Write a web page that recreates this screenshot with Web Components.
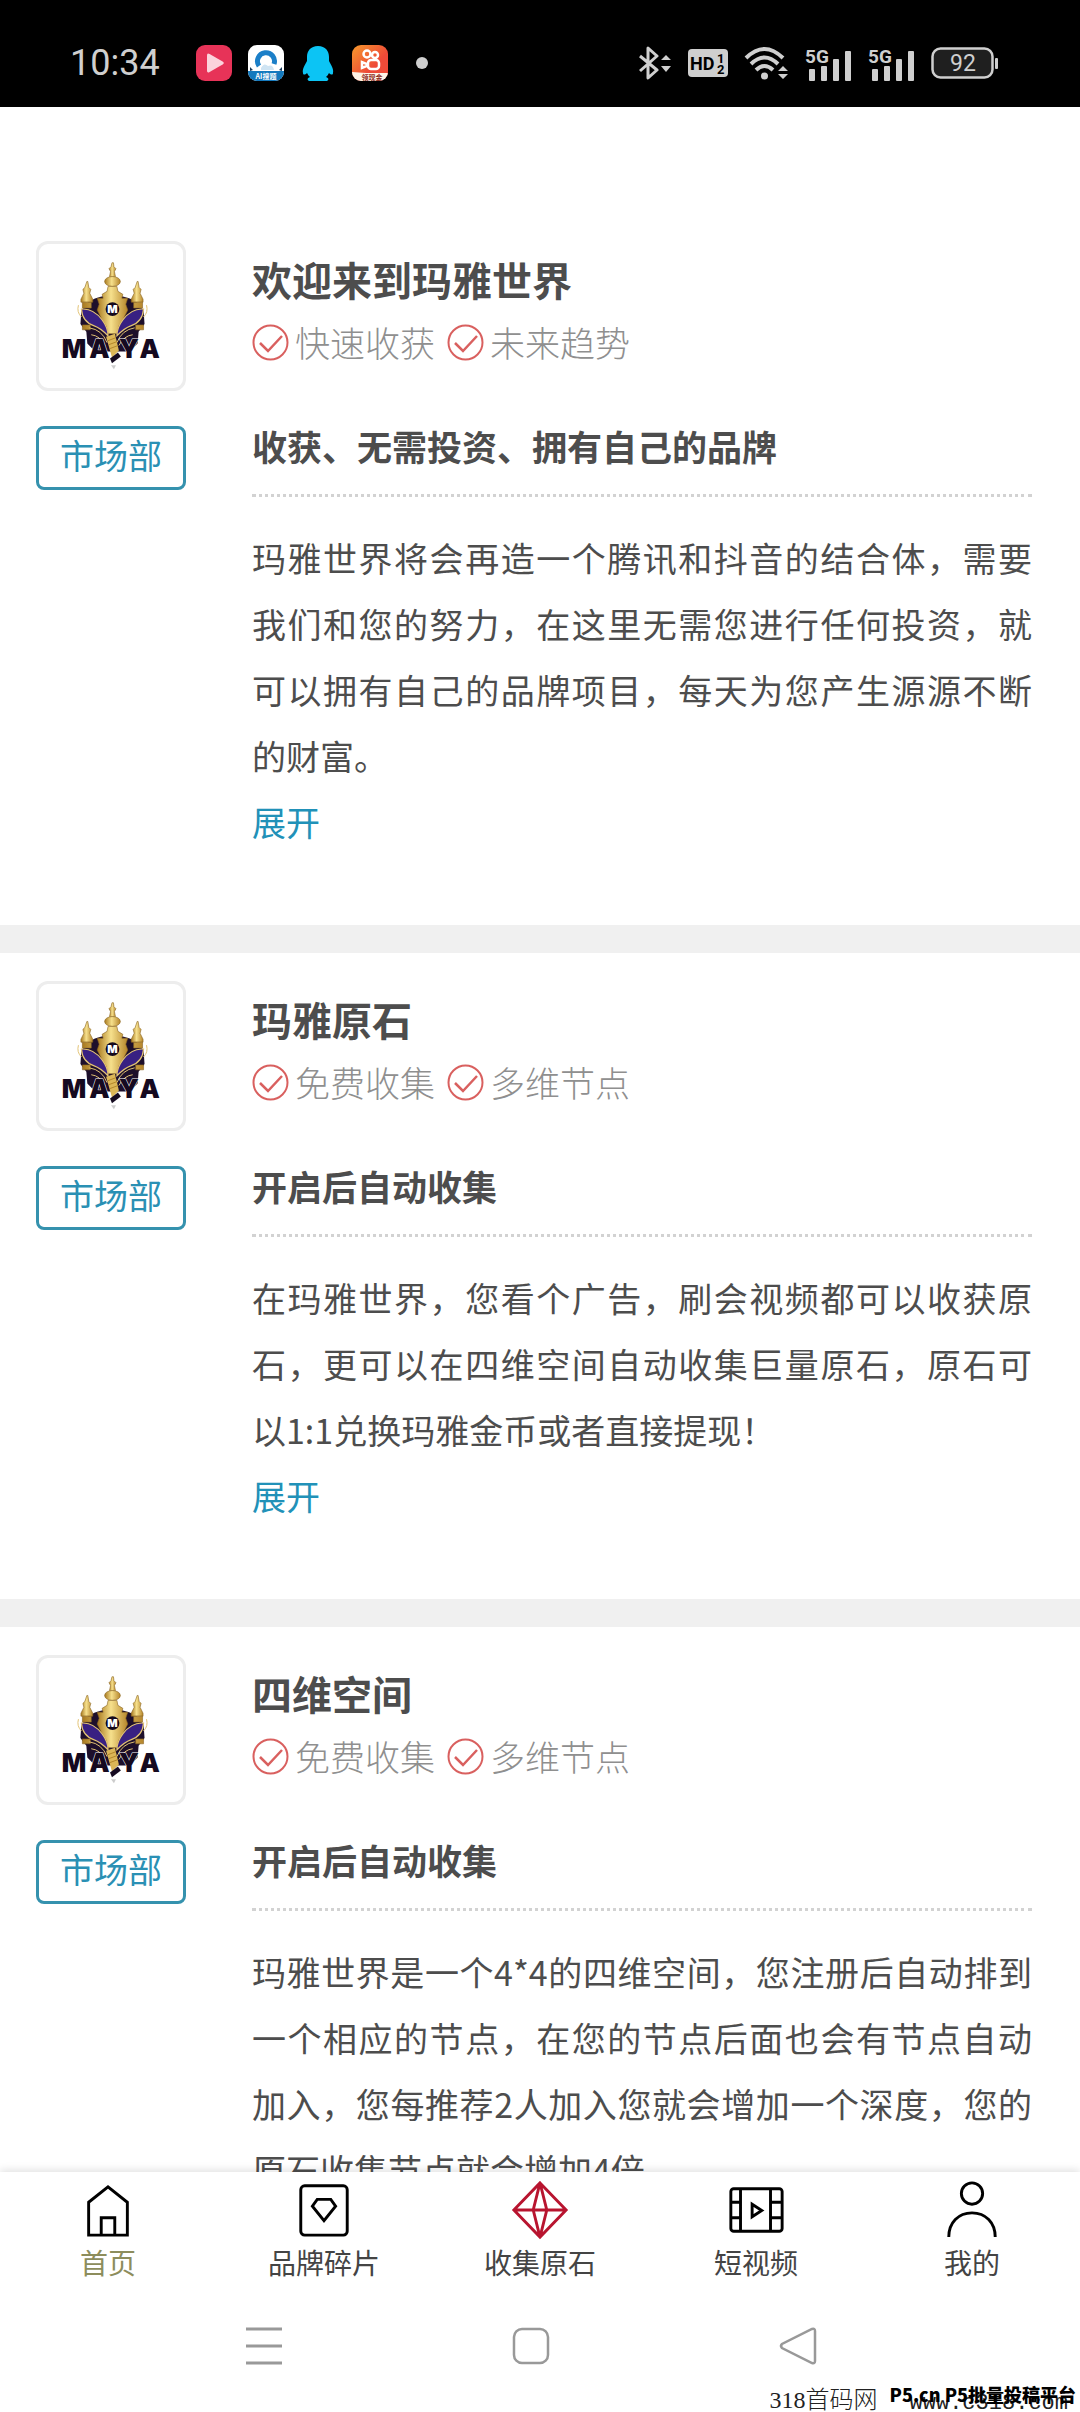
<!DOCTYPE html>
<html lang="zh-CN">
<head>
<meta charset="utf-8">
<meta name="viewport" content="width=device-width, initial-scale=1">
<title>玛雅世界</title>
<style>
html, body{
    margin: 0;
    height: 100%;
}
body{
    background: #fff;
    color: #4d4d4d;
    font-family: "Noto Sans CJK SC", "Noto Sans", sans-serif;
}
</style>
</head>
<body>
<app-shell>
    <status-bar slot="top" time="10:34" battery="92"></status-bar>

    <info-card tag="市场部" heading="收获、无需投资、拥有自己的品牌" more="展开">
        <span slot="title">欢迎来到玛雅世界</span>
        <check-label slot="badges">快速收获</check-label>
        <check-label slot="badges">未来趋势</check-label>
        玛雅世界将会再造一个腾讯和抖音的结合体，需要我们和您的努力，在这里无需您进行任何投资，就可以拥有自己的品牌项目，每天为您产生源源不断的财富。
    </info-card>
    <info-card tag="市场部" heading="开启后自动收集" more="展开">
        <span slot="title">玛雅原石</span>
        <check-label slot="badges">免费收集</check-label>
        <check-label slot="badges">多维节点</check-label>
        在玛雅世界，您看个广告，刷会视频都可以收获原石，更可以在四维空间自动收集巨量原石，原石可以1:1兑换玛雅金币或者直接提现！
    </info-card>
    <info-card tag="市场部" heading="开启后自动收集">
        <span slot="title">四维空间</span>
        <check-label slot="badges">免费收集</check-label>
        <check-label slot="badges">多维节点</check-label>
        玛雅世界是一个4*4的四维空间，您注册后自动排到一个相应的节点，在您的节点后面也会有节点自动加入，您每推荐2人加入您就会增加一个深度，您的原石收集节点就会增加4倍
    </info-card>

    <tab-bar slot="bottom">
        <tab-item icon="home" active>首页</tab-item>
        <tab-item icon="brand">品牌碎片</tab-item>
        <tab-item icon="gem">收集原石</tab-item>
        <tab-item icon="video">短视频</tab-item>
        <tab-item icon="user">我的</tab-item>
    </tab-bar>
    <system-nav slot="bottom"></system-nav>
    <water-mark slot="bottom"></water-mark>
</app-shell>

<script>
function attach(el, html){
    const template = document.createElement('template');
    template.innerHTML = html;
    const root = el.attachShadow({mode: 'open'});
    root.appendChild(template.content.cloneNode(true));
    return root;
}

class AppShell extends HTMLElement{
    constructor() {
        super();
        attach(this, `
        <style>
        :host{
            display: flex;
            flex-direction: column;
            height: 100vh;
            position: relative;
            overflow: hidden;
        }
        main{
            flex: 1;
            min-height: 0;
            overflow: hidden;
            padding-top: 106px;
        }
        </style>
        <slot name="top"></slot>
        <main><slot></slot></main>
        <slot name="bottom"></slot>
        `);
    }
}
customElements.define('app-shell', AppShell);

class StatusBar extends HTMLElement{
    constructor() {
        super();
        // signal bars with the network type above, used once for each SIM
        const signal = `
        <svg width="47" height="40" viewBox="0 -5 47 40" fill="#cfcfcf">
            <text x="0" y="15" font-size="19" font-weight="700">5G</text>
            <rect x="4" y="21" width="6" height="12" rx="1"/>
            <rect x="16" y="18" width="6" height="15" rx="1"/>
            <rect x="28" y="11" width="6" height="22" rx="1"/>
            <rect x="40" y="3" width="6" height="30" rx="1"/>
        </svg>`;
        attach(this, `
        <style>
        :host{
            display: flex;
            align-items: center;
            justify-content: space-between;
            box-sizing: border-box;
            height: 107px;
            padding: 18px 81px 0 70px;
            background: #000;
            color: #cfcfcf;
            font-family: Roboto, "Noto Sans", sans-serif;
            flex: none;
        }
        .group{
            display: flex;
            align-items: center;
        }
        .apps{
            gap: 16px;
        }
        .time{
            font-size: 36px;
            line-height: 44px;
            margin-right: 20px;
        }
        .state{
            gap: 16px;
        }
        svg{
            display: block;
        }
        svg text{
            font-family: "Roboto", sans-serif;
        }
        .cjk{
            font-family: "Noto Sans CJK SC", sans-serif;
        }
        </style>
        <div class="group apps">
            <span class="time"></span>
            <svg width="36" height="36" viewBox="0 0 36 36">
                <rect width="36" height="36" rx="9" fill="#e73358"/>
                <path d="M11 10.5q0-3 2.600-1.500l13 7.500q2.400 1.500 0 3l-13 7.500q-2.600 1.500-2.600-1.500z" fill="#fbd3dc"/>
            </svg>
            <svg width="36" height="36" viewBox="0 0 36 36">
                <clipPath id="b"><rect width="36" height="36" rx="9"/></clipPath>
                <g clip-path="url(#b)">
                    <rect width="36" height="36" fill="#fff"/>
                    <path d="M11 21a8.500 8.500 0 1 1 15-2" fill="none" stroke="#1b7fc8" stroke-width="5"/>
                    <path d="M13 23q3-6 7-2q5-2 6 4h-13z" fill="#cfe4f3"/>
                    <rect y="26" width="36" height="10" fill="#1479bd"/>
                    <path d="M2 22l3 3-3 1zM34 22l-3 3 3 1z" fill="#173a5c"/>
                    <text class="cjk" x="18" y="34" text-anchor="middle" font-size="7" font-weight="700" fill="#fff">AI搜题</text>
                </g>
            </svg>
            <svg width="36" height="36" viewBox="0 0 36 36">
                <path d="M18 1C10.500 1 7 6 7 12v4c-2 4-5 8-4 12 0 2 2 2 4 0 1 2 2 3 3 4-3 1-3 3-1 4h18c2-1 2-3-1-4 1-1 2-2 3-4 2 2 4 2 4 0 1-4-2-8-4-12v-4C29 6 25.500 1 18 1z" fill="#0cc4f4"/>
            </svg>
            <svg width="36" height="36" viewBox="0 0 36 36">
                <defs>
                    <clipPath id="k"><rect width="36" height="36" rx="9"/></clipPath>
                    <linearGradient id="o" x2="1" y2="1"><stop stop-color="#f79a2c"/><stop offset=".6" stop-color="#ee4a38"/></linearGradient>
                </defs>
                <g clip-path="url(#k)">
                    <rect width="36" height="36" fill="url(#o)"/>
                    <g fill="none" stroke="#fff" stroke-width="2.500">
                        <circle cx="15" cy="9" r="3.500"/><circle cx="23" cy="10" r="3"/>
                        <rect x="16" y="15" width="11" height="9" rx="3"/>
                        <path d="M10 17v6l5-2v-2z"/>
                    </g>
                    <path d="M0 27l14 1h22v8h-36z" fill="#fdf3e6"/>
                    <text class="cjk" x="20" y="35" text-anchor="middle" font-size="7" font-weight="700" fill="#8d2a1c">领现金</text>
                </g>
            </svg>
            <svg width="36" height="12" viewBox="0 0 36 12"><circle cx="18" cy="6" r="6" fill="#cfcfcf"/></svg>
        </div>
        <div class="group state">
            <svg width="34" height="34" viewBox="0 0 34 34">
                <path d="M2 10l17 14-9 8V2l9 8L2 25" fill="none" stroke="#cfcfcf" stroke-width="3" stroke-linejoin="round"/>
                <path d="M23 14l5-5 5 5zM23 20h10l-5 6z" fill="#cfcfcf"/>
            </svg>
            <svg width="40" height="28" viewBox="0 0 40 28">
                <rect width="40" height="28" rx="4" fill="#cfcfcf"/>
                <g font-weight="700" fill="#000">
                    <text x="2" y="21" font-size="18">HD</text>
                    <text x="29" y="14" font-size="13">1</text>
                    <text x="29" y="25" font-size="13">2</text>
                </g>
            </svg>
            <svg width="45" height="34" viewBox="0 0 45 34">
                <g fill="none" stroke="#cfcfcf" stroke-width="4">
                    <path d="M2 12Q20.500-6 39 12"/>
                    <path d="M7 18Q20.500 5 34 18"/>
                    <path d="M12 24Q20.500 16 29 24"/>
                </g>
                <circle cx="20.500" cy="30" r="3.500" fill="#cfcfcf"/>
                <path d="M34 25l5-5 5 5zM34 28h10l-5 5z" fill="#cfcfcf"/>
            </svg>
            ${signal}
            ${signal}
            <svg width="68" height="32" viewBox="0 0 68 32">
                <rect x="1.500" y="1.500" width="60" height="29" rx="8" fill="#1f1f1f" stroke="#cfcfcf" stroke-width="2.500"/>
                <rect x="64" y="11" width="3" height="11" rx="1" fill="#cfcfcf"/>
                <text class="battery" x="32" y="24" text-anchor="middle" font-size="23" fill="#cfcfcf"></text>
            </svg>
        </div>
        `);
        this.shadowRoot.querySelector('.time').textContent = this.getAttribute('time');
        this.shadowRoot.querySelector('.battery').textContent = this.getAttribute('battery');
    }
}
customElements.define('status-bar', StatusBar);

class MayaLogo extends HTMLElement{
    constructor() {
        super();
        attach(this, `
        <style>
        :host{
            display: block;
            box-sizing: border-box;
            height: 150px;
            border: 3px solid #ededed;
            border-radius: 12px;
        }
        svg{
            display: block;
            width: 100%;
            height: 100%;
        }
        text{
            font-family: Inter, "Open Sans", sans-serif;
            font-weight: 900;
        }
        </style>
        <svg viewBox="0 0 146 146">
            <defs>
                <linearGradient id="gold" x2="1">
                    <stop stop-color="#a8791f"/><stop offset=".45" stop-color="#f6e08c"/><stop offset="1" stop-color="#b5852a"/>
                </linearGradient>
            </defs>
            <g transform="translate(17 12)">
                <!-- dark shield behind the towers -->
                <path d="M34 46q23-12 47 0l8 9 1 14-6 8-1 12-8 8H40l-8-8-1-12-6-8 1-14z" fill="#1d0f2b"/>
                <g fill="url(#gold)" stroke="#8a6420" stroke-width=".6">
                    <!-- middle tower -->
                    <path d="M57 7h1.500l.5 4 2 2-1.500 3 1 5h-6l1-5-1.500-3 2-2z"/>
                    <ellipse cx="57.500" cy="26" rx="8" ry="5"/>
                    <path d="M53 31h9l1 5 5 3-1 4h6l-2 6 2 6-4 8-5 8-2 8h-9l-2-8-5-8-4-8 2-6-2-6h6l-1-4 5-3z"/>
                    <!-- side towers -->
                    <path d="M31.500 26h1l1 6 2 2-1 4 3 6v3h-12v-3l3-6-1-4 2-2z"/>
                    <path d="M82.500 26h1l1 6 2 2-1 4 3 6v3h-12v-3l3-6-1-4 2-2z"/>
                    <path d="M27 47h9v6h-9zM79 47h9v6h-9zM27 70h8v5h-8zM81 70h8v5h-8z"/>
                </g>
                <g fill="#382082" stroke="#e3c374" stroke-width="1.200">
                    <path d="M26 54q12-1 21 11 6 8 6 16-8-8-14-10-12-4-13-17z"/>
                    <path d="M89 54q-12-1-21 11-6 8-6 16 8-8 14-10 12-4 13-17z"/>
                </g>
                <g fill="none" stroke="#e3c374" stroke-width="1">
                    <path d="M23 50q-2 7 3 12M92 50q2 7-3 12"/>
                    <path d="M34 73q13 2 18 15M36 80q9 1 14 11M80 73q-13 2-18 15M78 80q-9 1-14 11"/>
                </g>
                <circle cx="57.500" cy="54" r="7" fill="#140a1d"/>
                <text x="57.500" y="58" font-size="11" text-anchor="middle" fill="#fff">M</text>
                <text y="104" font-size="26" fill="#150a20" stroke="#fff" stroke-width="1" paint-order="stroke"><tspan x="6">M</tspan><tspan x="34">A</tspan><tspan x="64">Y</tspan><tspan x="85">A</tspan></text>
                <path d="M51 82l9-3 4 17-7 7z" fill="#dcb757"/>
                <path d="M53 86l8-3M54 90l8-3M55 94l8-3" stroke="#a8791f" stroke-width=".8"/>
                <path d="M55 104l8-6 3 4-9 7z" fill="#150a20"/>
                <path d="M56 111h5l-2 4z" fill="#ccc"/>
            </g>
        </svg>
        `);
    }
}
customElements.define('maya-logo', MayaLogo);

class CheckLabel extends HTMLElement{
    constructor() {
        super();
        attach(this, `
        <style>
        :host{
            display: inline-flex;
            align-items: center;
            gap: 6px;
            color: #8f8f8f;
            font-size: 35px;
            font-weight: 300;
            line-height: 60px;
        }
        svg{
            display: block;
        }
        </style>
        <svg width="37" height="37" viewBox="0 0 37 37" fill="none" stroke="#d9605f">
            <circle cx="18.500" cy="18.500" r="17" stroke-width="2"/>
            <path d="M8 19l8 8 14-15" stroke-width="2.500"/>
        </svg>
        <span><slot></slot></span>
        `);
    }
}
customElements.define('check-label', CheckLabel);

class InfoCard extends HTMLElement{
    constructor() {
        super();
        const root = attach(this, `
        <style>
        :host{
            display: block;
            border-bottom: 28px solid #f0f0f0;
            padding: 28px 48px 70px 36px;
        }
        .grid{
            display: grid;
            grid-template-columns: 150px 1fr;
            column-gap: 66px;
            row-gap: 35px;
        }
        header{
            padding-top: 8px;
        }
        h2{
            margin: 0;
            font-size: 40px;
            line-height: 60px;
            font-weight: 700;
        }
        .badges{
            display: flex;
            gap: 12px;
            padding-top: 3px;
        }
        .tag{
            box-sizing: border-box;
            height: 64px;
            border: 3px solid #3592ae;
            border-radius: 8px;
            color: #2a90b4;
            font-size: 34px;
            line-height: 52px;
            text-align: center;
        }
        h3{
            margin: 0;
            padding-bottom: 28px;
            border-bottom: 3px dotted #d2d2d2;
            font-size: 35px;
            line-height: 40px;
            font-weight: 700;
        }
        p{
            margin: 28px 0 0;
            font-size: 34px;
            line-height: 66px;
            text-align: justify;
        }
        button{
            display: block;
            padding: 0;
            border: 0;
            background: none;
            color: #2191b8;
            font: inherit;
            font-size: 34px;
            line-height: 66px;
            cursor: pointer;
        }
        </style>
        <div class="grid">
            <maya-logo></maya-logo>
            <header>
                <h2><slot name="title"></slot></h2>
                <div class="badges"><slot name="badges"></slot></div>
            </header>
            <div class="tag"></div>
            <section>
                <h3></h3>
                <p><slot></slot></p>
            </section>
        </div>
        `);
        root.querySelector('.tag').textContent = this.getAttribute('tag');
        root.querySelector('h3').textContent = this.getAttribute('heading');

        if(this.hasAttribute('more')){
            const button = document.createElement('button');
            button.setAttribute('type', 'button');
            button.textContent = this.getAttribute('more');
            root.querySelector('section').appendChild(button);
        }
    }
}
customElements.define('info-card', InfoCard);

class TabBar extends HTMLElement{
    constructor() {
        super();
        attach(this, `
        <style>
        :host{
            display: block;
            position: relative;
            flex: none;
            background: #fff;
            box-shadow: 0 -2px 8px rgba(0, 0, 0, .12);
        }
        nav{
            display: grid;
            grid-template-columns: repeat(5, 1fr);
            padding-top: 8px;
        }
        </style>
        <nav><slot></slot></nav>
        `);
    }
}
customElements.define('tab-bar', TabBar);

const tabIcons = {
    home: '<path d="M10 23L30 7l20 16v34H10zM23 57V39h14v18"/>',
    brand: '<rect x="6" y="6" width="48" height="51" rx="4"/><path d="M23 20h14l5 7-12 15-12-15z"/>',
    gem: '<path d="M30 3l27 28-27 28L3 31zM3 31h54M30 3l-7 28 7 28 7-28z"/>',
    video: '<rect x="4" y="9" width="53" height="44" rx="3"/><path d="M14 9v44M45 9v44M4 23h10M4 39h10M45 23h12M45 39h12M26 25v13l10-6.500z"/>',
    user: '<circle cx="30" cy="14" r="11"/><path d="M6 59C6 44 16 34 30 34s24 10 24 25"/>'
};

class TabItem extends HTMLElement{
    constructor() {
        super();
        const icon = this.getAttribute('icon');
        attach(this, `
        <style>
        :host{
            display: block;
        }
        a{
            display: flex;
            flex-direction: column;
            align-items: center;
            color: #444;
            font-size: 28px;
            line-height: 44px;
            text-decoration: none;
        }
        :host([active]) a{
            color: #8d8d5c;
        }
        svg{
            display: block;
            fill: none;
            stroke: #000;
            stroke-width: 3;
        }
        svg.gem{
            stroke: #b8142f;
        }
        </style>
        <a href="#${icon}">
            <svg class="${icon}" width="60" height="60" viewBox="0 0 60 62">${tabIcons[icon]}</svg>
            <span><slot></slot></span>
        </a>
        `);
    }
}
customElements.define('tab-item', TabItem);

class SystemNav extends HTMLElement{
    constructor() {
        super();
        attach(this, `
        <style>
        :host{
            display: grid;
            grid-template-columns: repeat(3, 1fr);
            justify-items: center;
            position: relative;
            flex: none;
            padding: 38px 148px 42px 130px;
            background: #fff;
        }
        button{
            padding: 0;
            border: 0;
            background: none;
        }
        svg{
            display: block;
            fill: none;
            stroke: #999;
            stroke-width: 2.5;
        }
        </style>
        <button type="button" aria-label="菜单">
            <svg width="48" height="48" viewBox="0 0 48 48"><path d="M6 7h36M6 24h36M6 41h36" stroke-width="3"/></svg>
        </button>
        <button type="button" aria-label="主屏幕">
            <svg width="48" height="48" viewBox="0 0 48 48"><rect x="7" y="7" width="34" height="34" rx="8"/></svg>
        </button>
        <button type="button" aria-label="返回">
            <svg width="48" height="48" viewBox="0 0 48 48"><path d="M38 7q3-1 3 2v30q0 3-3 2L8 26q-2-2 0-4z"/></svg>
        </button>
        `);
    }
}
customElements.define('system-nav', SystemNav);

class WaterMark extends HTMLElement{
    constructor() {
        super();
        attach(this, `
        <style>
        :host{
            display: flex;
            align-items: flex-end;
            gap: 32px;
            position: absolute;
            right: 12px;
            bottom: 0;
            color: #222;
            line-height: 24px;
            white-space: nowrap;
        }
        .site{
            font-family: "Liberation Serif", "Noto Sans CJK SC", serif;
            font-size: 24px;
            font-weight: 300;
        }
        .url{
            font-family: "Liberation Mono", monospace;
            font-size: 22px;
            line-height: 16px;
        }
        .brand{
            position: absolute;
            right: -8px;
            bottom: 6px;
            color: #000;
            font-size: 18px;
            font-weight: 900;
        }
        </style>
        <span class="site">318首码网</span>
        <span class="url">www.c318.com</span>
        <span class="brand">P5.cn P5批量投稿平台</span>
        `);
    }
}
customElements.define('water-mark', WaterMark);
</script>
</body>
</html>
